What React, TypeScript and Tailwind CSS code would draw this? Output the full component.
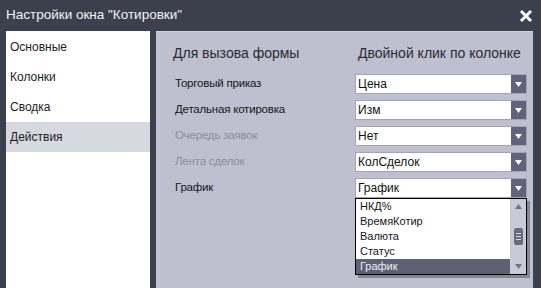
const DARK = '#3c3f4c';

const rows = [
  { label: 'Торговый приказ', value: 'Цена', enabled: true },
  { label: 'Детальная котировка', value: 'Изм', enabled: true },
  { label: 'Очередь заявок', value: 'Нет', enabled: false },
  { label: 'Лента сделок', value: 'КолСделок', enabled: false },
  { label: 'График', value: 'График', enabled: true },
];

const listItems = ['НКД%', 'ВремяКотир', 'Валюта', 'Статус', 'График'];

function Caret({ color = '#ffffff' }: { color?: string }) {
  return (
    <svg width="7" height="5" viewBox="0 0 7 5">
      <path d="M0 0 L7 0 L3.5 5 Z" fill={color} />
    </svg>
  );
}

function SelectBox({ value }: { value: string }) {
  return (
    <div className="flex h-[20px] w-[172px] border border-[#a3a4b4] bg-white">
      <div className="flex flex-1 items-center pl-[2px] text-[12px] text-[#111]">{value}</div>
      <div className="flex w-[15px] items-center justify-center bg-[#62637a]">
        <Caret />
      </div>
    </div>
  );
}

export default function App() {
  return (
    <div
      className="flex h-[288px] w-[541px] flex-col overflow-hidden"
      style={{ fontFamily: '"Liberation Sans", Arial, sans-serif', backgroundColor: DARK }}
    >
      {/* title bar */}
      <div className="flex h-[31px] shrink-0 items-center justify-between pl-[6px] pr-[8px]">
        <span className="text-[13.5px] text-[#f2f2f5]">Настройки окна "Котировки"</span>
        <svg width="14" height="14" viewBox="0 0 14 14">
          <path d="M2 2 L12 12 M12 2 L2 12" stroke="#ffffff" strokeWidth="3" />
        </svg>
      </div>

      <div className="flex flex-1 gap-[6px] pl-[6px]">
        {/* left nav */}
        <div className="flex w-[144px] flex-col bg-white pt-[1px]">
          {['Основные', 'Колонки', 'Сводка', 'Действия'].map((item, i) => (
            <div
              key={item}
              className={`flex h-[30px] items-center pl-[4px] text-[12px] text-[#1c1c24] ${
                i === 3 ? 'bg-[#d6d9e0]' : ''
              }`}
            >
              {item}
            </div>
          ))}
        </div>

        {/* right panel */}
        <div className="relative flex w-[377px] flex-col border-t border-[#cfd0dc] bg-[#bfc0cf] pr-[6px] pt-[11px]">
          <div className="flex h-[20px] items-center whitespace-nowrap text-[14px] text-[#2a2a33]">
            <span className="w-[202px] pl-[17px]">Для вызова формы</span>
            <span>Двойной клик по колонке</span>
          </div>

          <div className="mt-[11px] flex flex-col gap-[6px]">
            {rows.map((r) => (
              <div key={r.label} className="flex h-[20px] items-center">
                <span
                  className={`w-[199px] pl-[19px] text-[11.5px] tracking-[-0.2px] ${
                    r.enabled ? 'text-[#15151c]' : 'text-[#8b8d9c]'
                  }`}
                >
                  {r.label}
                </span>
                <SelectBox value={r.value} />
              </div>
            ))}
          </div>

          {/* open dropdown list */}
          <div className="absolute left-[199px] top-[166px] flex h-[77px] w-[172px] border border-black bg-white shadow-[3px_3px_0_rgba(0,0,0,0.3)]">
            <div className="flex flex-1 flex-col">
              {listItems.map((it, i) => (
                <div
                  key={it}
                  className={`flex h-[15px] items-center pl-[4px] text-[11px] ${
                    i === 4 ? 'bg-[#5f6074] text-[#eeeef3]' : 'text-[#15151c]'
                  }`}
                >
                  {it}
                </div>
              ))}
            </div>
            <div className="flex w-[16px] flex-col items-center justify-between bg-[#c9cad6] py-[5px]">
              <svg width="7" height="5" viewBox="0 0 7 5">
                <path d="M0 5 L7 5 L3.5 0 Z" fill="#6f7183" />
              </svg>
              <div className="flex h-[17px] w-[9px] flex-col items-center justify-center gap-[2px] rounded-[2px] bg-[#686a7e]">
                <div className="h-[1px] w-[5px] bg-[#d8d9e2]" />
                <div className="h-[1px] w-[5px] bg-[#d8d9e2]" />
                <div className="h-[1px] w-[5px] bg-[#d8d9e2]" />
              </div>
              <Caret color="#6f7183" />
            </div>
          </div>
        </div>
      </div>
    </div>
  );
}
